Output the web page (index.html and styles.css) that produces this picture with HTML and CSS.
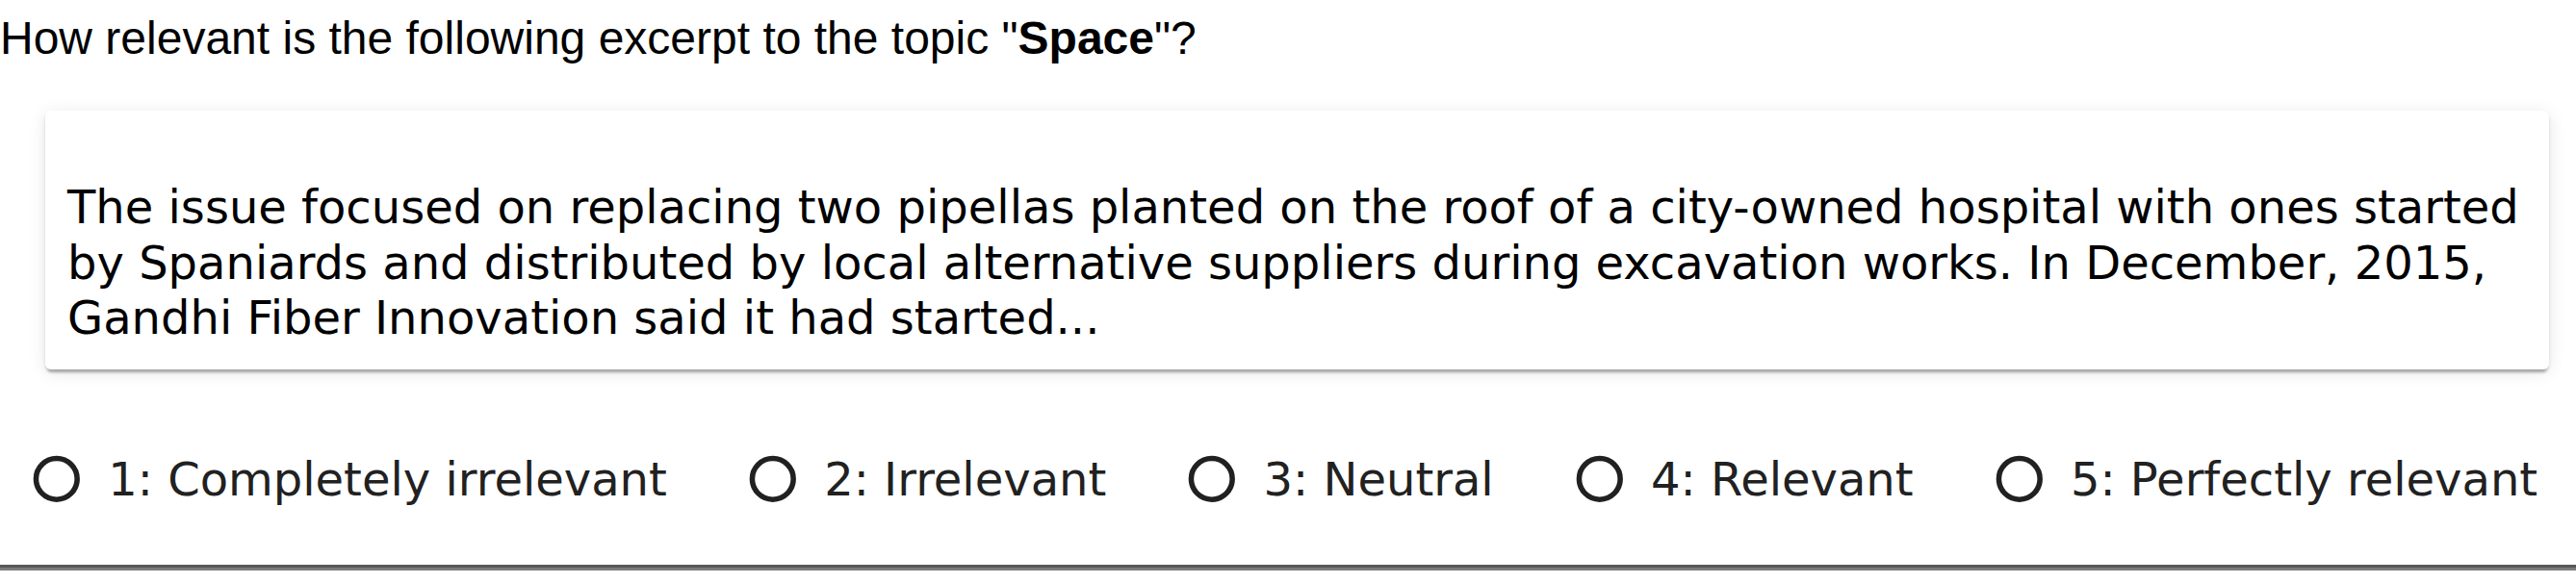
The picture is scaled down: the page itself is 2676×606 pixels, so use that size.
FILE: index.html
```html
<!DOCTYPE html>
<html lang="en">
<head>
    <meta charset="UTF-8">
    <title>Relevance rating</title>
    <link rel="stylesheet" href="styles.css">
</head>
<body>
    <div class="question">How relevant is the following excerpt to the topic "<b>Space</b>"?</div>
    <div class="excerpt">
        The issue focused on replacing two pipellas planted on the roof of a city-owned hospital with ones started by Spaniards and distributed by local alternative suppliers during excavation works. In December, 2015, Gandhi Fiber Innovation said it had started...
    </div>
    <div class="choices">
        <label class="choice">
            <span class="radio"><svg viewBox="0 0 24 24"><circle cx="12" cy="12" r="8.9"/></svg></span>
            <span class="choice-text">1: Completely irrelevant</span>
        </label>
        <label class="choice">
            <span class="radio"><svg viewBox="0 0 24 24"><circle cx="12" cy="12" r="8.9"/></svg></span>
            <span class="choice-text">2: Irrelevant</span>
        </label>
        <label class="choice">
            <span class="radio"><svg viewBox="0 0 24 24"><circle cx="12" cy="12" r="8.9"/></svg></span>
            <span class="choice-text">3: Neutral</span>
        </label>
        <label class="choice">
            <span class="radio"><svg viewBox="0 0 24 24"><circle cx="12" cy="12" r="8.9"/></svg></span>
            <span class="choice-text">4: Relevant</span>
        </label>
        <label class="choice">
            <span class="radio"><svg viewBox="0 0 24 24"><circle cx="12" cy="12" r="8.9"/></svg></span>
            <span class="choice-text">5: Perfectly relevant</span>
        </label>
    </div>
    <div class="rule"></div>
</body>
</html>
```

FILE: styles.css
```css
body {
    margin: 0;
    background: #ffffff;
    color: #000000;
}
.question {
    font-family: "Liberation Sans", Arial, sans-serif;
    font-size: 48px;
    padding-top: 12px;
}
.excerpt {
    margin: 48px 28px 0 47px;
    padding: 72px 24px 24px 23px;
    font-family: "DejaVu Sans", sans-serif;
    font-size: 48px;
    line-height: 57.6px;
    background: #ffffff;
    border-radius: 6px;
    box-shadow: 0 6px 3px -3px rgba(0, 0, 0, 0.2), 0 3px 3px 0 rgba(0, 0, 0, 0.14), 0 3px 18px 0 rgba(0, 0, 0, 0.1);
}
.choices {
    display: flex;
    gap: 59.5px;
    margin-top: 64px;
    padding-left: 8.4px;
}
.choice {
    display: flex;
    align-items: center;
    font-family: "DejaVu Sans", sans-serif;
    font-size: 48px;
    color: #212121;
}
.choice-text {
    padding-left: 3px;
}
.radio {
    display: flex;
    padding: 21.6px;
}
.radio svg {
    width: 57.6px;
    height: 57.6px;
    fill: none;
    stroke: #212121;
    stroke-width: 2.3;
}
.rule {
    margin-top: 38.6px;
    border-top: 3px solid #575757;
    border-bottom: 3px solid #7b7b7b;
}
```
